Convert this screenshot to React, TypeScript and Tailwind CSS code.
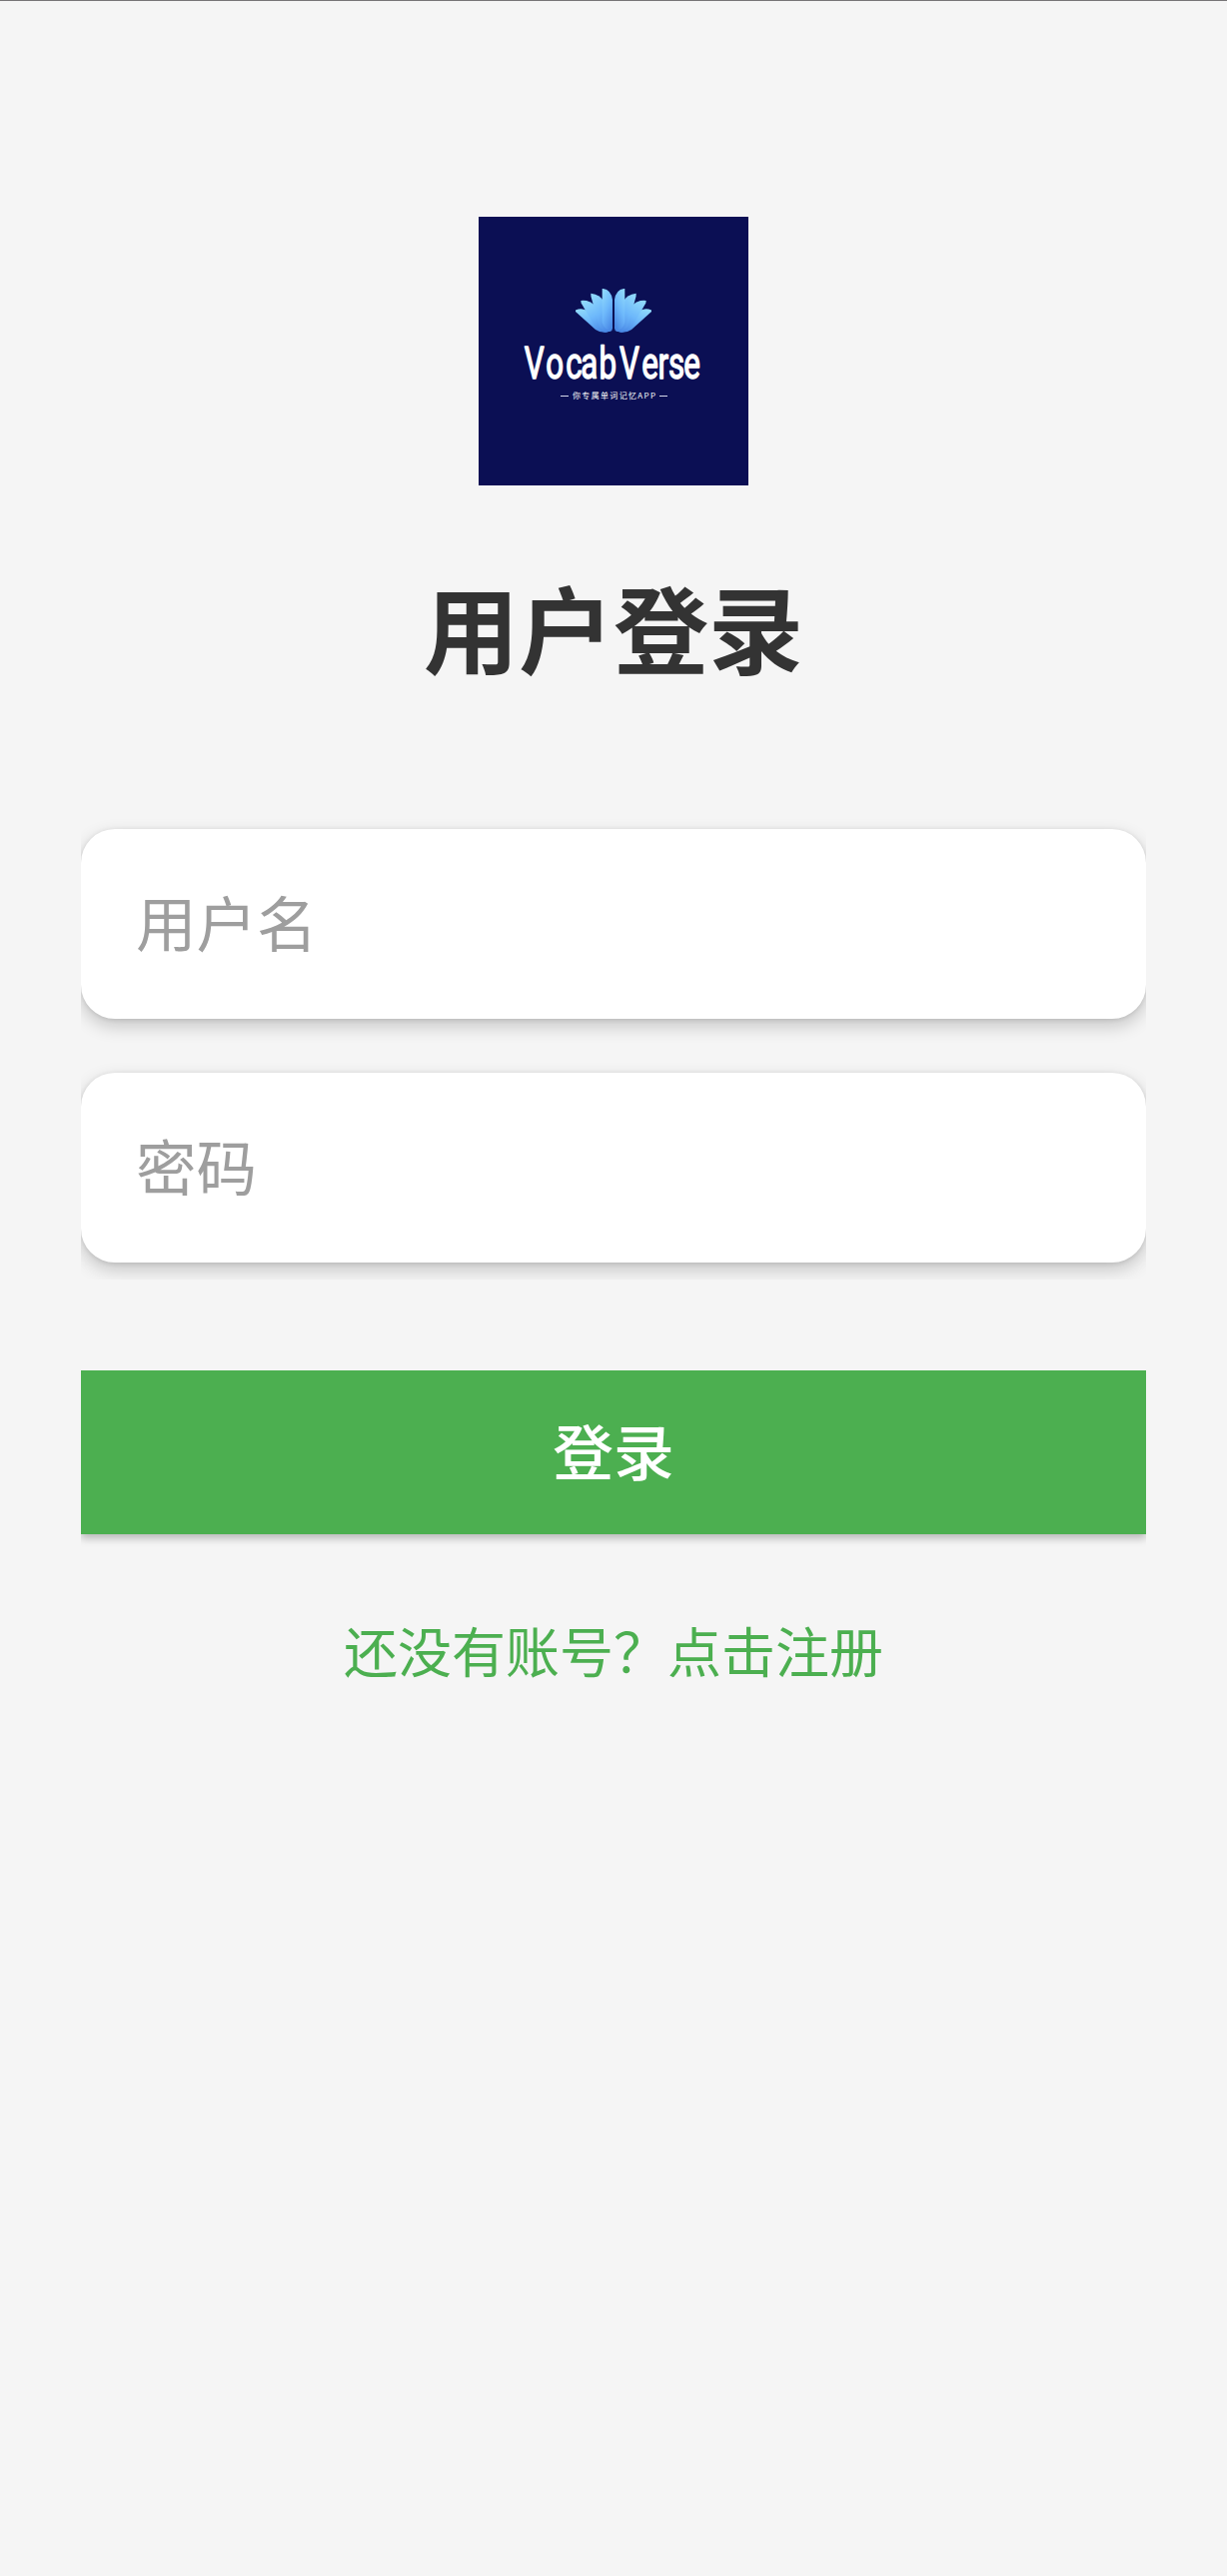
import { useId, useState } from "react";

// right half of the lotus, back to front; mirrored for the left half
const petals = [
  "M4 42 L25 23 Q31 18.5 38 21.5 L38 23 L18 41 Q14 44 8 43.8 Z",
  "M2.5 42 L18 17.5 Q24 11 32.7 12 L32.3 14.5 L18 39 Q13 44 6 43.6 Z",
  "M1.5 42 L9 14 Q13 5.5 22.7 4.7 L22.5 8 L14 38 Q10 43.6 4 43 Z",
  "M1 40 L1 11 Q2.5 1 10.4 0 L11.3 0 L11.3 34 Q9 42 2 41.5 Z",
];

function Lotus() {
  const id = useId();

  const half = petals.map((d) => (
    <path key={d} d={d} fill={`url(#${id})`} />
  ));

  return (
    <g transform="translate(135 72)">
      <defs>
        <linearGradient id={id} x1="0.8" y1="0" x2="0.3" y2="1">
          <stop offset="0" stopColor="#8fd8fb" />
          <stop offset="0.5" stopColor="#6db8fb" />
          <stop offset="1" stopColor="#4a8ae6" />
        </linearGradient>
      </defs>
      <g>{half}</g>
      <g transform="scale(-1 1)">{half}</g>
    </g>
  );
}

function Logo() {
  return (
    <svg
      viewBox="0 0 270 269"
      className="h-[269px] w-[270px] bg-[#0b0f54]"
      role="img"
      aria-label="VocabVerse"
    >
      <Lotus />
      <text
        transform="translate(0 161.5) scale(0.72 1)"
        x="63.6 93.4 121.1 142.1 167.4 196 226.7 249.4 263.8 285"
        y="0"
        fontFamily="Roboto, sans-serif"
        fontSize="43.5"
        fill="#fff"
        stroke="#fff"
        strokeWidth="1.4"
        strokeLinejoin="round"
      >
        VocabVerse
      </text>
      <path d="M82 179.5h8M181 179.5h8" stroke="#d5d8ec" strokeWidth="1" />
      <text
        x="94"
        y="182"
        fontFamily="'Noto Sans CJK SC', sans-serif"
        fontSize="8"
        textLength="83"
        fill="#fff"
      >
        你专属单词记忆APP
      </text>
    </svg>
  );
}

function Field({
  type,
  placeholder,
  value,
  onChange,
}: {
  type: string;
  placeholder: string;
  value: string;
  onChange: (value: string) => void;
}) {
  return (
    <input
      type={type}
      placeholder={placeholder}
      value={value}
      onChange={(e) => onChange(e.target.value)}
      className="block h-[190px] w-full rounded-[34px] bg-white px-[55px] pb-[7px] text-[60.5px] text-[#333] shadow-[0_7px_18px_rgba(0,0,0,0.2),0_1px_5px_rgba(0,0,0,0.1)] outline-none placeholder:text-[#9e9e9e]"
    />
  );
}

export default function App() {
  const [username, setUsername] = useState("");
  const [password, setPassword] = useState("");

  return (
    <main className="flex h-[2579px] w-full flex-col items-center border-t border-[#777577] bg-[#f5f5f5] px-[81px] pt-[216px] font-['Noto_Sans_CJK_SC',sans-serif]">
      <Logo />
      <h1 className="mt-[78px] text-[95px] leading-[126px] font-bold text-[#333]">
        用户登录
      </h1>

      <form
        className="mt-[140px] w-full"
        onSubmit={(e) => e.preventDefault()}
      >
        <div className="flex flex-col gap-[54px] [clip-path:inset(-20px_0_-17px_0)]">
          <Field
            type="text"
            placeholder="用户名"
            value={username}
            onChange={setUsername}
          />
          <Field
            type="password"
            placeholder="密码"
            value={password}
            onChange={setPassword}
          />
        </div>
        <button
          type="submit"
          className="mt-[108px] block h-[164px] w-full bg-[#4caf50] pb-[6px] text-[60.75px] font-medium text-white shadow-[0_4px_8px_rgba(0,0,0,0.26)] [clip-path:inset(0_0_-20px_0)]"
        >
          登录
        </button>
      </form>

      <a
        href="#"
        className="mt-[76px] text-[54px] leading-[80px] text-[#4caf50]"
      >
        还没有账号？点击注册
      </a>
    </main>
  );
}
